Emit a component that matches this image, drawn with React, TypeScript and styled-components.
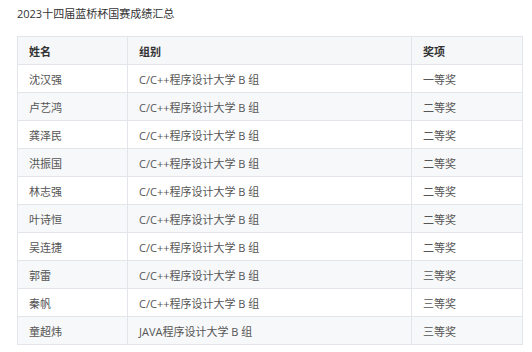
import styled, { createGlobalStyle } from 'styled-components';

const GlobalStyle = createGlobalStyle`
  body {
    margin: 0;
    background: #ffffff;
    font-family: 'Open Sans', 'Noto Sans CJK SC', sans-serif;
  }
`;

type Row = { name: string; group: string; prize: string };

const rows: Row[] = [
  { name: '沈汉强', group: 'C/C++程序设计大学 B 组', prize: '一等奖' },
  { name: '卢艺鸿', group: 'C/C++程序设计大学 B 组', prize: '二等奖' },
  { name: '龚泽民', group: 'C/C++程序设计大学 B 组', prize: '二等奖' },
  { name: '洪振国', group: 'C/C++程序设计大学 B 组', prize: '二等奖' },
  { name: '林志强', group: 'C/C++程序设计大学 B 组', prize: '二等奖' },
  { name: '叶诗恒', group: 'C/C++程序设计大学 B 组', prize: '二等奖' },
  { name: '吴连捷', group: 'C/C++程序设计大学 B 组', prize: '二等奖' },
  { name: '郭雷', group: 'C/C++程序设计大学 B 组', prize: '三等奖' },
  { name: '秦帆', group: 'C/C++程序设计大学 B 组', prize: '三等奖' },
  { name: '童超炜', group: 'JAVA程序设计大学 B 组', prize: '三等奖' },
];

const App = () => {
  return (
    <Page>
      <GlobalStyle />
      <Title>2023十四届蓝桥杯国赛成绩汇总</Title>
      <Table>
        <colgroup>
          <col style={{ width: 110 }} />
          <col style={{ width: 284 }} />
          <col style={{ width: 111 }} />
        </colgroup>
        <thead>
          <tr>
            <HeadCell>姓名</HeadCell>
            <HeadCell>组别</HeadCell>
            <HeadCell>奖项</HeadCell>
          </tr>
        </thead>
        <tbody>
          {rows.map((r) => (
            <BodyRow key={r.name}>
              <Cell>{r.name}</Cell>
              <Cell>{r.group}</Cell>
              <Cell>{r.prize}</Cell>
            </BodyRow>
          ))}
        </tbody>
      </Table>
    </Page>
  );
};

const Page = styled.div`
  padding: 6px 10px 0 17px;
`;

const Title = styled.div`
  font-size: 11px;
  line-height: 16px;
  color: #333333;
  margin-bottom: 14px;
`;

const Table = styled.table`
  border-collapse: collapse;
  table-layout: fixed;
  width: 505px;
  font-size: 11px;
`;

const HeadCell = styled.th`
  height: 27px;
  padding: 0 11px;
  text-align: left;
  font-weight: 700;
  color: #333333;
  background: #f6f7f8;
  border: 1px solid #e2e5e9;
`;

const BodyRow = styled.tr`
  &:nth-child(even) td {
    background: #f7f8f9;
  }
`;

const Cell = styled.td`
  height: 27px;
  padding: 0 11px;
  color: #555555;
  background: #ffffff;
  border: 1px solid #e2e5e9;
  white-space: nowrap;
`;

export default App;
